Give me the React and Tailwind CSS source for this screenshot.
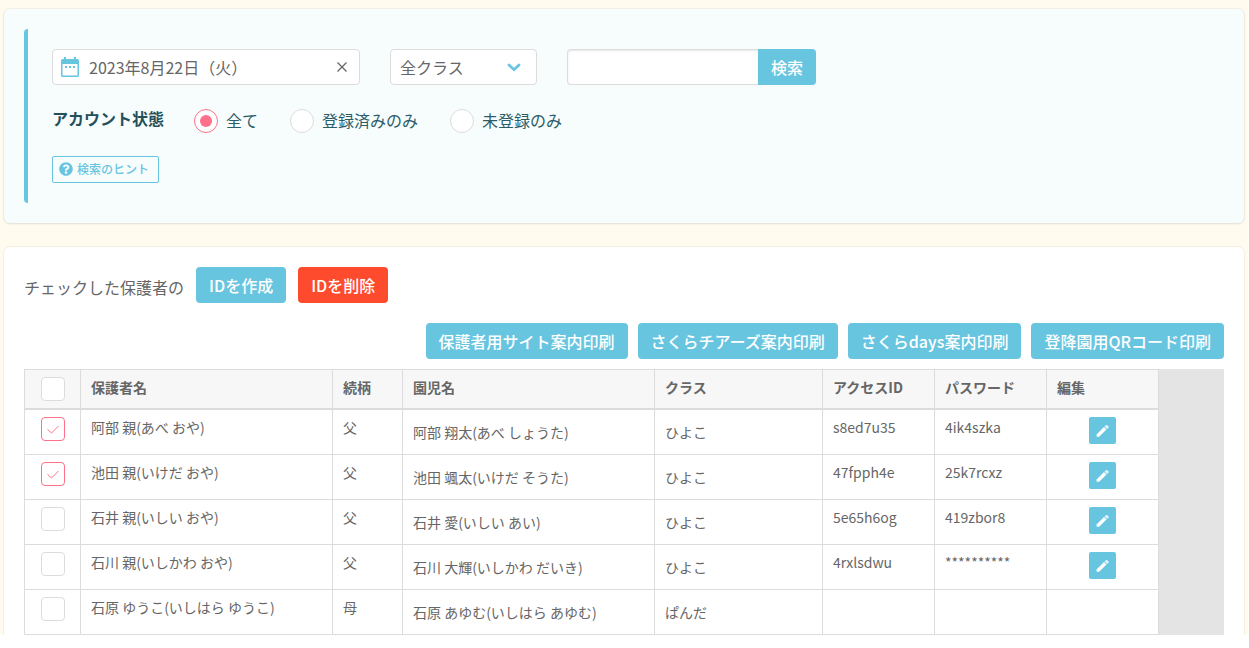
import React, { useState } from "react";
import { FaQuestionCircle } from "react-icons/fa";

const parents = [
  { id: 1, name: "阿部 親(あべ おや)", relation: "父", child: "阿部 翔太(あべ しょうた)", className: "ひよこ", accessId: "s8ed7u35", password: "4ik4szka" },
  { id: 2, name: "池田 親(いけだ おや)", relation: "父", child: "池田 颯太(いけだ そうた)", className: "ひよこ", accessId: "47fpph4e", password: "25k7rcxz" },
  { id: 3, name: "石井 親(いしい おや)", relation: "父", child: "石井 愛(いしい あい)", className: "ひよこ", accessId: "5e65h6og", password: "419zbor8" },
  { id: 4, name: "石川 親(いしかわ おや)", relation: "父", child: "石川 大輝(いしかわ だいき)", className: "ひよこ", accessId: "4rxlsdwu", password: "**********" },
  { id: 5, name: "石原 ゆうこ(いしはら ゆうこ)", relation: "母", child: "石原 あゆむ(いしはら あゆむ)", className: "ぱんだ", accessId: "", password: "" },
];

const statuses = [
  { value: "all", label: "全て" },
  { value: "registered", label: "登録済みのみ" },
  { value: "unregistered", label: "未登録のみ" },
];

const printButtons = [
  "保護者用サイト案内印刷",
  "さくらチアーズ案内印刷",
  "さくらdays案内印刷",
  "登降園用QRコード印刷",
];

const CalendarIcon = () => (
  <svg viewBox="0 0 18 20" className="h-5 w-[18px] shrink-0" aria-hidden="true">
    <path
      fill="#68c5e0"
      fillRule="evenodd"
      d="M3 0h2v2h8V0h2v2h1.5A1.5 1.5 0 0 1 18 3.5v15a1.5 1.5 0 0 1-1.5 1.5h-15A1.5 1.5 0 0 1 0 18.5v-15A1.5 1.5 0 0 1 1.5 2H3zM1.500 7v11.500h15V7zM4 9h2v2H4zM8 9h2v2H8zM12 9h2v2h-2z"
    />
  </svg>
);

const PencilIcon = () => (
  <svg viewBox="0 0 14 14" className="h-[14px] w-[14px]" aria-hidden="true">
    <path fill="#fff" d="M.6 10.4 8 3.1 10.500 5.500 3.100 12.800H.6z" />
    <path fill="#fff" fillOpacity="0.8" d="M8.500 2.500 9.700 1.300q.8-.7 1.500-.1L12.500 2.300q.7.7 0 1.500L11.100 5z" />
  </svg>
);

const Checkbox = ({ label, checked, onChange }) => (
  <label className="mx-auto grid h-6 w-6">
    <input
      type="checkbox"
      aria-label={label}
      checked={checked}
      onChange={onChange}
      className="col-start-1 row-start-1 h-6 w-6 appearance-none rounded border border-[#dcdcdc] bg-white checked:border-[#ff708a]"
    />
    {checked && (
      <svg viewBox="0 0 24 24" className="pointer-events-none col-start-1 row-start-1 h-6 w-6" aria-hidden="true">
        <path d="M6.5 12.3 10.5 16 17.5 9" fill="none" stroke="#ff708a" strokeWidth="1" />
      </svg>
    )}
  </label>
);

const Button = ({ children, danger }) => (
  <button
    type="button"
    className={`h-9 rounded px-[13px] text-base font-medium text-white ${danger ? "bg-[#ff4b2d]" : "bg-[#68c5e0]"}`}
  >
    {children}
  </button>
);

const SearchPanel = () => {
  const [status, setStatus] = useState("all");
  const [date, setDate] = useState("2023年8月22日（火）");

  return (
    <section className="rounded-md bg-[#f7fdfd] p-5 shadow-[0_0_0_1px_rgba(0,0,0,0.04),0_1px_3px_rgba(0,0,0,0.08)]">
      <div className="rounded-l border-l-4 border-[#68c5e0] py-5 pl-6">
        <div className="flex flex-wrap gap-[30px]">
          <div className="flex h-9 w-[308px] items-center rounded border border-[#dcdcdc] bg-white px-2">
            <CalendarIcon />
            <input
              type="text"
              aria-label="日付"
              value={date}
              onChange={(e) => setDate(e.target.value)}
              className="ml-[10px] min-w-0 flex-1 outline-none"
            />
            <button type="button" aria-label="クリア" onClick={() => setDate("")} className="p-1">
              <svg viewBox="0 0 10 10" className="h-[10px] w-[10px]" aria-hidden="true">
                <path d="M.5.5 9.5 9.5M9.5.5.5 9.5" stroke="#666" strokeWidth="1.3" />
              </svg>
            </button>
          </div>

          <div className="grid h-9 w-[147px] items-center">
            <select
              aria-label="クラス"
              className="col-start-1 row-start-1 h-9 appearance-none rounded border border-[#dcdcdc] bg-white pl-[9px] outline-none"
            >
              <option>全クラス</option>
              <option>ひよこ</option>
              <option>ぱんだ</option>
            </select>
            <svg
              viewBox="0 0 14 9"
              className="pointer-events-none col-start-1 row-start-1 mr-4 h-[9px] w-[14px] justify-self-end"
              aria-hidden="true"
            >
              <path d="M2 2 7 6.7 12 2" fill="none" stroke="#68c5e0" strokeWidth="2.8" strokeLinecap="round" />
            </svg>
          </div>

          <form className="flex" onSubmit={(e) => e.preventDefault()}>
            <input
              type="text"
              aria-label="検索キーワード"
              className="h-9 w-[191px] rounded-l border border-r-0 border-[#dcdcdc] bg-white px-2 shadow-[inset_0_1px_2px_rgba(0,0,0,0.1)] outline-none"
            />
            <button type="submit" className="h-9 rounded-r bg-[#68c5e0] px-[13px] font-medium text-white">
              検索
            </button>
          </form>
        </div>

        <fieldset className="mt-6 flex items-start gap-[30px] text-[#2c5c68]">
          <legend className="float-left text-base leading-[18px] font-bold text-[#24505c]">アカウント状態</legend>
          <div className="flex gap-8">
            {statuses.map((item) => (
              <label key={item.value} className="flex items-start gap-2 leading-[22px]">
                <span className="grid h-6 w-6 place-items-center">
                  <input
                    type="radio"
                    name="status"
                    value={item.value}
                    checked={status === item.value}
                    onChange={() => setStatus(item.value)}
                    className="peer col-start-1 row-start-1 h-6 w-6 appearance-none rounded-full border border-[#dcdcdc] bg-white checked:border-[#ff708a]"
                  />
                  <span className="col-start-1 row-start-1 hidden h-3 w-3 rounded-full bg-[#ff708a] peer-checked:block" />
                </span>
                {item.label}
              </label>
            ))}
          </div>
        </fieldset>

        <button
          type="button"
          className="mt-[23px] flex h-[27px] items-center gap-1 rounded-[2px] border border-[#68c5e0] pr-[9px] pb-[2px] pl-[6px] text-xs font-medium text-[#68c5e0]"
        >
          <FaQuestionCircle className="h-[14px] w-[14px]" />
          検索のヒント
        </button>
      </div>
    </section>
  );
};

const ParentTable = () => {
  const [selected, setSelected] = useState([1, 2]);

  const toggle = (id) =>
    setSelected((prev) => (prev.includes(id) ? prev.filter((x) => x !== id) : [...prev, id]));

  const allSelected = selected.length === parents.length;
  const th = "border-r border-b-2 border-[#dcdcdc] px-[10px] pt-[7px] text-left align-top font-bold";
  const td = "border-r border-b border-[#dcdcdc] px-[10px] pt-[7px] align-top";
  const tdLow = "border-r border-b border-[#dcdcdc] px-[10px] pt-3 align-top";
  const tdControl = "border-r border-b border-[#dcdcdc] pt-[7px] align-top";

  return (
    <div className="mt-[10px] bg-[#e4e4e4]">
      <table className="w-[1135px] table-fixed border-separate border-spacing-0 border-t border-l border-[#dcdcdc] bg-white text-sm leading-5">
        <colgroup>
          <col className="w-[56px]" />
          <col className="w-[252px]" />
          <col className="w-[70px]" />
          <col className="w-[252px]" />
          <col className="w-[168px]" />
          <col className="w-[112px]" />
          <col className="w-[112px]" />
          <col className="w-[112px]" />
        </colgroup>
        <thead className="bg-[#f7f7f7]">
          <tr className="h-10">
            <th className="border-r border-b-2 border-[#dcdcdc] pt-[7px] align-top">
              <Checkbox
                label="全て選択"
                checked={allSelected}
                onChange={() => setSelected(allSelected ? [] : parents.map((p) => p.id))}
              />
            </th>
            <th className={th}>保護者名</th>
            <th className={th}>続柄</th>
            <th className={th}>園児名</th>
            <th className={th}>クラス</th>
            <th className={th}>アクセスID</th>
            <th className={th}>パスワード</th>
            <th className={th}>編集</th>
          </tr>
        </thead>
        <tbody>
          {parents.map((p) => (
            <tr key={p.id} className="h-[45px]">
              <td className={tdControl}>
                <Checkbox label={p.name} checked={selected.includes(p.id)} onChange={() => toggle(p.id)} />
              </td>
              <td className={td}>{p.name}</td>
              <td className={td}>{p.relation}</td>
              <td className={tdLow}>{p.child}</td>
              <td className={tdLow}>{p.className}</td>
              <td className={td}>{p.accessId}</td>
              <td className={td}>{p.password}</td>
              <td className={tdControl}>
                {p.accessId && (
                  <button
                    type="button"
                    aria-label="編集"
                    className="mx-auto flex h-[27px] w-[27px] items-center justify-center rounded-[2px] bg-[#68c5e0]"
                  >
                    <PencilIcon />
                  </button>
                )}
              </td>
            </tr>
          ))}
        </tbody>
      </table>
    </div>
  );
};

export default function App() {
  return (
    <div className="bg-[#fffbee] pt-[9px] pr-[5px] pl-1 font-['Noto_Sans_CJK_JP',sans-serif] text-base text-[#666]">
      <SearchPanel />

      <section className="mt-6 rounded-t-md bg-white px-5 pt-5 shadow-[0_0_0_1px_rgba(0,0,0,0.05)]">
        <div className="flex items-center gap-3">
          <span className="pt-1">チェックした保護者の</span>
          <Button>IDを作成</Button>
          <Button danger>IDを削除</Button>
        </div>
        <div className="mt-5 flex flex-wrap justify-end gap-[10px]">
          {printButtons.map((label) => (
            <Button key={label}>{label}</Button>
          ))}
        </div>
        <ParentTable />
      </section>
    </div>
  );
}
